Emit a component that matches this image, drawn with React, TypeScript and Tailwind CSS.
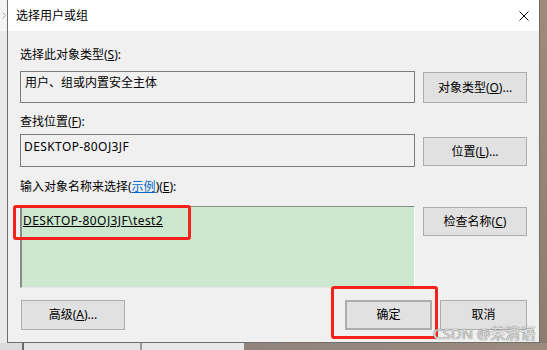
import React from "react";

const font = "font-['Segoe_UI','Noto_Sans','Noto_Sans_CJK_SC',sans-serif]";

function Btn({ children, className = "" }: { children: React.ReactNode; className?: string }) {
  return (
    <div
      className={`flex items-center justify-center bg-[#e1e1e1] border border-[#adadad] text-[12px] text-black ${className}`}
    >
      {children}
    </div>
  );
}

export default function App() {
  return (
    <div className={`w-[547px] h-[350px] overflow-hidden relative flex flex-col ${font}`}>
      <div className="flex h-[343px]">
        {/* left desktop strip */}
        <div className="w-[7px] flex flex-col">
          <div className="h-[31px] bg-[#f3f3f3] flex items-center justify-start pl-[2px]">
            <svg width="4" height="7" viewBox="0 0 4 7">
              <path d="M0.5 0.5 L3.5 3.5 L0.5 6.5" stroke="#a8a8a8" fill="none" />
            </svg>
          </div>
          <div className="flex-1 bg-[#e9e9e9]" />
        </div>

        {/* dialog */}
        <div className="w-[533px] flex flex-col border-x border-b border-[#6e6e6e] bg-[#f0f0f0]">
          <div className="h-[31px] bg-white flex items-center justify-between pl-[8px] pr-[10px]">
            <span className="text-[12px] text-black">选择用户或组</span>
            <svg width="10" height="10" viewBox="0 0 10 10">
              <path d="M0.5 0.5 L9.5 9.5 M9.5 0.5 L0.5 9.5" stroke="#111" strokeWidth="1" />
            </svg>
          </div>

          <div className="flex flex-col pl-[12px] pr-[12px] text-[12px] text-black leading-[16px]">
            <div className="mt-[16px]">
              选择此对象类型(<span className="underline">S</span>):
            </div>
            <div className="mt-[8px] flex gap-[8px] items-start">
              <div className="w-[395px] h-[32px] border border-[#7a7a7a] px-[4px] pt-[3px]">
                用户、组或内置安全主体
              </div>
              <Btn className="w-[104px] h-[31px] mt-[1px]">
                对象类型(<span className="underline">O</span>)...
              </Btn>
            </div>

            <div className="mt-[11px]">
              查找位置(<span className="underline">F</span>):
            </div>
            <div className="mt-[4px] flex gap-[8px] items-start">
              <div className="w-[395px] h-[33px] border border-[#7a7a7a] px-[3px] pt-[4px] tracking-[0.4px]">
                DESKTOP-80OJ3JF
              </div>
              <Btn className="w-[104px] h-[29px] mt-[3px]">
                位置(<span className="underline">L</span>)...
              </Btn>
            </div>

            <div className="mt-[12px]">
              输入对象名称来选择(<span className="underline text-[#0066cc]">示例</span>)(
              <span className="underline">E</span>):
            </div>
            <div className="mt-[11px] flex gap-[8px] items-start">
              <div className="w-[395px] h-[82px] bg-[#cce8cf] border-l-2 border-t border-l-[#8a8a8a] border-t-[#8a8a8a] border-r border-b border-r-white border-b-[#e6e6e6] px-[1px] pt-[6px] tracking-[0.4px]">
                <span className="underline">DESKTOP-80OJ3JF\test2</span>
              </div>
              <Btn className="w-[104px] h-[29px] mt-[1px]">
                检查名称(<span className="underline">C</span>)
              </Btn>
            </div>

            <div className="mt-[12px] flex items-start">
              <Btn className="w-[104px] h-[30px] ml-[1px]">
                高级(<span className="underline">A</span>)...
              </Btn>
              <div className="flex-1" />
              <Btn className="w-[87px] h-[30px] border-2 border-[#0078d7]">确定</Btn>
              <Btn className="w-[87px] h-[30px] ml-[8px]">取消</Btn>
            </div>
          </div>
        </div>

        {/* right desktop strip */}
        <div className="flex-1 bg-gradient-to-b from-[#a08b7a] to-[#8e7c70]" />
      </div>

      {/* bottom desktop strip */}
      <div className="flex-1 flex">
        <div className="w-[22px] bg-[#dcdcdc]" />
        <div className="w-[2px] bg-[#6a6a6a]" />
        <div className="w-[116px] bg-[#e4e4e4]" />
        <div className="w-[2px] bg-[#9a9a9a]" />
        <div className="w-[102px] bg-[#e8e8e8]" />
        <div className="flex-1 bg-gradient-to-r from-[#8f847c] to-[#9c8a7e]" />
      </div>

      {/* red highlight boxes */}
      <div className="absolute left-[13px] top-[205px] w-[178px] h-[35px] border-[3px] border-[#f5211a] rounded-[3px]" />
      <div className="absolute left-[331px] top-[286px] w-[107px] h-[53px] border-[3px] border-[#f5211a] rounded-[3px]" />

      {/* watermark */}
      <div className="absolute left-[433px] top-[324px] text-[15px] leading-[18px] text-[#dcdcdc] [text-shadow:0_0_1px_#777,0_0_1px_#777] font-['Noto_Sans','Noto_Sans_CJK_SC',sans-serif]">
        CSDN @茉清语
      </div>
    </div>
  );
}
